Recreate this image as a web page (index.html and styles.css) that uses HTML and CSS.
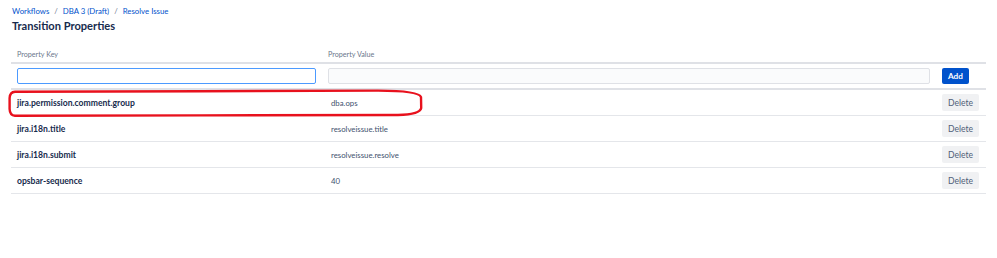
FILE: index.html
```html
<!DOCTYPE html>
<html lang="en">
<head>
    <meta charset="UTF-8">
    <meta name="viewport" content="width=device-width, initial-scale=1.0">
    <title>Transition Properties</title>
    <link rel="stylesheet" href="styles.css">
</head>
<body>
    <div class="page">
        <nav class="breadcrumbs">
            <a href="#">Workflows</a>
            <span class="sep">/</span>
            <a href="#">DBA 3 (Draft)</a>
            <span class="sep">/</span>
            <a href="#">Resolve Issue</a>
        </nav>
        <h2 class="title">Transition Properties</h2>

        <table class="props">
            <colgroup>
                <col class="col-key">
                <col class="col-value">
                <col class="col-action">
            </colgroup>
            <thead>
                <tr>
                    <th>Property Key</th>
                    <th>Property Value</th>
                    <th></th>
                </tr>
            </thead>
            <tbody>
                <tr class="add-row">
                    <td><input type="text" class="field focused" name="key"></td>
                    <td><input type="text" class="field" name="value"></td>
                    <td><button class="btn btn-primary">Add</button></td>
                </tr>
                <tr>
                    <td class="key">jira.permission.comment.group</td>
                    <td class="value">dba.ops</td>
                    <td><button class="btn">Delete</button></td>
                </tr>
                <tr>
                    <td class="key">jira.i18n.title</td>
                    <td class="value">resolveissue.title</td>
                    <td><button class="btn">Delete</button></td>
                </tr>
                <tr>
                    <td class="key">jira.i18n.submit</td>
                    <td class="value">resolveissue.resolve</td>
                    <td><button class="btn">Delete</button></td>
                </tr>
                <tr>
                    <td class="key">opsbar-sequence</td>
                    <td class="value">40</td>
                    <td><button class="btn">Delete</button></td>
                </tr>
            </tbody>
        </table>

        <!-- hand drawn highlight around the first property -->
        <svg class="markup" viewBox="0 0 997 258" width="997" height="258">
            <path d="M15 91.8 L200 91.2 L378 90.6 Q419 90.8 421 97 L421.2 108 Q420 114.5 398 115 L200 115.4 L15 115.8 Q9.8 115.4 9.6 109 L9.6 98 Q10 92 15 91.8 Z"/>
        </svg>
    </div>
</body>
</html>
```

FILE: styles.css
```css
body {
    margin: 0;
    background-color: #fff;
    font-family: Lato, "Noto Sans", sans-serif;
    color: #172b4d;
}

.page {
    position: relative;
    width: 997px;
    height: 258px;
    padding: 4px 11px 0 11px;
    box-sizing: border-box;
}

.breadcrumbs {
    display: flex;
    align-items: center;
    gap: 5px;
    height: 13px;
    padding-left: 1px;
    font-size: 7.8px;
}

.breadcrumbs a {
    color: #0052cc;
    text-decoration: none;
}

.breadcrumbs .sep {
    color: #6b778c;
}

.title {
    margin: 1px 0 0 1px;
    font-size: 11.1px;
    line-height: 16px;
    font-weight: 700;
    color: #172b4d;
}

.props {
    width: 975px;
    margin-top: 12px;
    border-collapse: collapse;
    table-layout: fixed;
}

.col-key {
    width: 311px;
}

.col-value {
    width: 614px;
}

.col-action {
    width: 50px;
}

.props th {
    height: 16px;
    padding: 0 6px;
    text-align: left;
    font-size: 7.2px;
    font-weight: 400;
    color: #6b778c;
    border-bottom: 2px solid #dfe1e6;
    vertical-align: middle;
}

.props td {
    height: 25px;
    padding: 0 6px;
    font-size: 8.6px;
    border-bottom: 1px solid #e4e6ea;
    vertical-align: middle;
}

.props .add-row td {
    height: 16px;
    padding: 4px 6px 4px 6px;
    border-bottom: 2px solid #dfe1e6;
}

.field {
    display: block;
    width: 100%;
    height: 16px;
    box-sizing: border-box;
    margin: 0;
    border: 1px solid #dfe1e6;
    border-radius: 2px;
    background-color: #fafbfc;
}

.field.focused {
    border-color: #4c9aff;
    background-color: #fff;
}

.key {
    font-weight: 700;
    color: #172b4d;
}

.props td.value {
    padding-left: 9px;
    font-size: 7.8px;
    color: #42526e;
}

.btn {
    display: block;
    height: 17px;
    padding: 0 6px;
    border: none;
    border-radius: 2px;
    background-color: #f0f1f3;
    color: #505f79;
    font-family: inherit;
    font-size: 8.6px;
    cursor: pointer;
}

.btn-primary {
    height: 16px;
    padding: 0 6px;
    background-color: #0052cc;
    color: #fff;
    font-weight: 700;
    font-size: 8.2px;
}

.markup {
    position: absolute;
    left: 0;
    top: 0;
    pointer-events: none;
}

.markup path {
    fill: none;
    stroke: #e8111d;
    stroke-width: 2.4;
    stroke-linejoin: round;
}
```
